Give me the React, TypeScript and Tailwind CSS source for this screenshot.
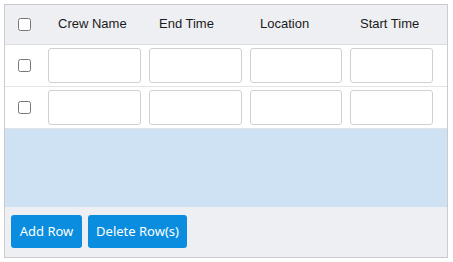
import React from 'react';

const columns = ['Crew Name', 'End Time', 'Location', 'Start Time'];
const rows = [1, 2];

// checkbox column + four input columns, a little gutter left at the right
const gridCols = 'grid grid-cols-[39px_101px_101px_100px_91px]';

export default function App() {
  return (
    <div className="w-[453px] h-[262px] bg-white pt-[4px] pl-[4px]">
      <div className="w-[444px] h-[254px] border border-[#c9cbcf] flex flex-col font-['Liberation_Sans',Arial,sans-serif]">
        {/* Header */}
        <div className={`${gridCols} h-[40px] bg-[#eeeff3] border-b border-[#dcdde1] items-center`}>
          <div className="flex justify-center">
            <input type="checkbox" className="w-[13px] h-[13px] m-0" />
          </div>
          {columns.map((c) => (
            <div key={c} className="pl-[14px] text-[13px] text-[#1a1a1a] leading-none -mt-[2px]">
              {c}
            </div>
          ))}
        </div>

        {/* Rows */}
        {rows.map((r) => (
          <div key={r} className={`${gridCols} h-[42px] border-b border-[#e2e3e6] items-center`}>
            <div className="flex justify-center">
              <input type="checkbox" className="w-[13px] h-[13px] m-0" />
            </div>
            {columns.map((c) => (
              <div key={c} className="px-[4px]">
                <input
                  type="text"
                  className="w-full h-[35px] bg-white border border-[#cfd0d3] rounded-[3px] outline-none"
                />
              </div>
            ))}
          </div>
        ))}

        {/* Empty body */}
        <div className="h-[78px] bg-[#cfe2f3]" />

        {/* Footer */}
        <div className="flex-1 bg-[#eeeff3] flex gap-[6px] pl-[6px] pt-[8px] font-['Noto_Sans',sans-serif]">
          <button className="h-[33px] w-[71px] bg-[#0b8ddf] text-white text-[13px] rounded-[3px]">
            Add Row
          </button>
          <button className="h-[33px] w-[99px] bg-[#0b8ddf] text-white text-[13px] rounded-[3px]">
            Delete Row(s)
          </button>
        </div>
      </div>
    </div>
  );
}
